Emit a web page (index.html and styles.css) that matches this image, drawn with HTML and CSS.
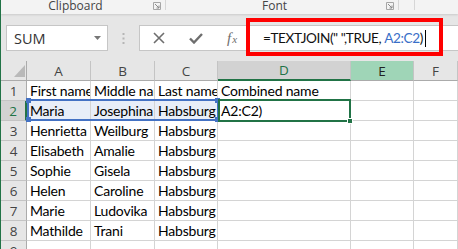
FILE: index.html
```html
<!DOCTYPE html>
<html lang="en">
<head>
    <meta charset="UTF-8">
    <title>TEXTJOIN</title>
    <link rel="stylesheet" href="styles.css">
</head>
<body>
<div class="app">

    <!-- Ribbon (bottom edge only) -->
    <div class="ribbon">
        <div class="group group-clipboard">
            <span class="group-label">Clipboard</span>
            <svg class="launcher" width="8" height="8" viewBox="0 0 8 8">
                <path d="M0.5 0.5V7.5H7.5V0.5Z" fill="none" stroke="#a6a6a6" stroke-width="1"/>
                <path d="M2 2L6 6M3.5 6H6V3.5" fill="none" stroke="#8a8a8a" stroke-width="1"/>
            </svg>
        </div>
        <div class="group group-font">
            <span class="group-label">Font</span>
            <svg class="launcher" width="8" height="8" viewBox="0 0 8 8">
                <path d="M0.5 0.5V7.5H7.5V0.5Z" fill="none" stroke="#a6a6a6" stroke-width="1"/>
                <path d="M2 2L6 6M3.5 6H6V3.5" fill="none" stroke="#8a8a8a" stroke-width="1"/>
            </svg>
        </div>
        <div class="group"></div>
    </div>

    <!-- Name box + formula bar -->
    <div class="formula-bar">
        <div class="name-box">
            <span>SUM</span>
            <svg width="7" height="4" viewBox="0 0 7 4"><path d="M0 0H7L3.5 4Z" fill="#777"/></svg>
        </div>
        <div class="grip">
            <svg width="3" height="11" viewBox="0 0 3 11">
                <rect x="0.5" y="0" width="2" height="2" fill="#b5b5b5"/>
                <rect x="0.5" y="4.5" width="2" height="2" fill="#b5b5b5"/>
                <rect x="0.5" y="9" width="2" height="2" fill="#b5b5b5"/>
            </svg>
        </div>
        <div class="formula-box">
            <div class="fx-buttons">
                <svg class="btn-cancel" width="12" height="12" viewBox="0 0 12 12">
                    <path d="M1 1L11 11M11 1L1 11" stroke="#6e6e6e" stroke-width="1.6"/>
                </svg>
                <svg class="btn-enter" width="14" height="11" viewBox="0 0 14 11">
                    <path d="M1 5.5L5 9.5L13 1" fill="none" stroke="#6e6e6e" stroke-width="2.4"/>
                </svg>
                <span class="btn-fx"><i>f</i><span class="fx-x">x</span></span>
            </div>
            <div class="formula-input">=TEXTJOIN(" ",TRUE, <span class="ref">A2:C2</span>)<span class="caret"></span></div>
        </div>
        <div class="callout"></div>
    </div>

    <!-- Worksheet -->
    <div class="sheet">
        <div class="hdr corner">
            <svg width="11" height="12" viewBox="0 0 11 12"><path d="M11 0V12H0Z" fill="#b9b9b9"/></svg>
        </div>
        <div class="hdr col">A</div>
        <div class="hdr col">B</div>
        <div class="hdr col">C</div>
        <div class="hdr col col-active">D</div>
        <div class="hdr col col-marked">E</div>
        <div class="hdr col">F</div>

        <div class="hdr row">1</div>
        <div class="cell">First name</div>
        <div class="cell">Middle name</div>
        <div class="cell">Last name</div>
        <div class="cell">Combined name</div>
        <div class="cell"></div>
        <div class="cell"></div>

        <div class="hdr row row-active">2</div>
        <div class="cell in-range">Maria</div>
        <div class="cell in-range">Josephina</div>
        <div class="cell in-range">Habsburg</div>
        <div class="cell editing">A2:C2)</div>
        <div class="cell"></div>
        <div class="cell"></div>

        <div class="hdr row">3</div>
        <div class="cell">Henrietta</div>
        <div class="cell">Weilburg</div>
        <div class="cell">Habsburg</div>
        <div class="cell"></div>
        <div class="cell"></div>
        <div class="cell"></div>

        <div class="hdr row">4</div>
        <div class="cell">Elisabeth</div>
        <div class="cell">Amalie</div>
        <div class="cell">Habsburg</div>
        <div class="cell"></div>
        <div class="cell"></div>
        <div class="cell"></div>

        <div class="hdr row">5</div>
        <div class="cell">Sophie</div>
        <div class="cell">Gisela</div>
        <div class="cell">Habsburg</div>
        <div class="cell"></div>
        <div class="cell"></div>
        <div class="cell"></div>

        <div class="hdr row">6</div>
        <div class="cell">Helen</div>
        <div class="cell">Caroline</div>
        <div class="cell">Habsburg</div>
        <div class="cell"></div>
        <div class="cell"></div>
        <div class="cell"></div>

        <div class="hdr row">7</div>
        <div class="cell">Marie</div>
        <div class="cell">Ludovika</div>
        <div class="cell">Habsburg</div>
        <div class="cell"></div>
        <div class="cell"></div>
        <div class="cell"></div>

        <div class="hdr row">8</div>
        <div class="cell">Mathilde</div>
        <div class="cell">Trani</div>
        <div class="cell">Habsburg</div>
        <div class="cell"></div>
        <div class="cell"></div>
        <div class="cell"></div>

        <div class="hdr row">9</div>
        <div class="cell"></div>
        <div class="cell"></div>
        <div class="cell"></div>
        <div class="cell"></div>
        <div class="cell"></div>
        <div class="cell"></div>

        <!-- Range reference highlight A2:C2 -->
        <div class="range-ref">
            <span class="knob knob-tl"></span>
            <span class="knob knob-tr"></span>
            <span class="knob knob-bl"></span>
            <span class="knob knob-br"></span>
        </div>
        <!-- Active cell D2 -->
        <div class="active-cell"><span class="fill-handle"></span></div>
    </div>

</div>
</body>
</html>
```

FILE: styles.css
```css
/* Reset */
* {
    margin: 0;
    padding: 0;
    box-sizing: border-box;
}

body {
    font-family: 'Lato', 'Liberation Sans', sans-serif;
    background-color: #fff;
    overflow: hidden;
}

.app {
    width: 458px;
    height: 249px;
    border-left: 1px solid #217346;
    overflow: hidden;
}

/* Ribbon */
.ribbon {
    display: flex;
    height: 14px;
    background-color: #f3f3f3;
    box-shadow: 0 1px 2px rgba(0, 0, 0, 0.12);
    position: relative;
    z-index: 1;
}

.group {
    position: relative;
    display: flex;
    justify-content: center;
    padding-right: 16px;
    height: 14px;
}

/* short separator line at the right of each group */
.group::after {
    content: "";
    position: absolute;
    right: 0;
    top: 0;
    width: 1px;
    height: 10px;
    background-color: #d6d6d6;
}

.group-clipboard {
    width: 165px;
}

.group-font {
    width: 233px;
}

.group-label {
    font-family: 'Open Sans', sans-serif;
    font-size: 12px;
    line-height: 12px;
    color: #444;
}

.launcher {
    position: absolute;
    right: 5px;
    top: 2px;
}

/* Formula bar */
.formula-bar {
    position: relative;
    display: flex;
    align-items: flex-start;
    height: 47px;
    padding: 11px 0 0 5px;
    background-color: #e6e6e6;
}

.name-box {
    display: flex;
    align-items: center;
    justify-content: space-between;
    width: 102px;
    height: 26px;
    padding: 0 6px 0 7px;
    background-color: #fff;
    border: 1px solid #c6c6c6;
    font-family: 'Open Sans', sans-serif;
    font-size: 14.5px;
    color: #333;
}

.grip {
    width: 31px;
    display: flex;
    justify-content: center;
    padding-top: 8px;
}

.formula-box {
    flex: 1;
    display: flex;
    align-items: center;
    height: 26px;
    background-color: #fff;
    border: 1px solid #c6c6c6;
    border-right: none;
}

.fx-buttons {
    display: flex;
    align-items: center;
    width: 111px;
    padding-left: 13px;
}

.btn-cancel {
    margin-right: 24px;
}

.btn-enter {
    margin-right: 24px;
}

.btn-fx {
    font-family: 'Liberation Serif', serif;
    font-size: 15px;
    font-style: italic;
    color: #6e6e6e;
}

.fx-x {
    font-size: 11px;
    margin-left: 1px;
}

.formula-input {
    padding-left: 12px;
    font-family: 'Lato', sans-serif;
    font-size: 13.6px;
    letter-spacing: -0.4px;
    color: #111;
    white-space: pre;
    display: flex;
    align-items: center;
}

.formula-input .ref {
    color: #3a6fc8;
}

.caret {
    display: inline-block;
    width: 1px;
    height: 17px;
    margin-left: 2px;
    background-color: #000;
}

/* red annotation box */
.callout {
    position: absolute;
    left: 245px;
    top: 4px;
    width: 197px;
    height: 38px;
    border: 4px solid #f00;
}

/* Worksheet */
.sheet {
    position: relative;
    display: grid;
    grid-template-columns: 26px 64px 64px 63px 133px 63px 1fr;
    grid-auto-rows: 20px;
}

.hdr {
    background-color: #e6e6e6;
    color: #444;
    font-family: 'Open Sans', sans-serif;
    font-size: 13.5px;
    display: flex;
    align-items: center;
    justify-content: center;
    border-right: 1px solid #c4c4c4;
    border-bottom: 1px solid #c4c4c4;
}

.hdr.col {
    border-bottom: 1px solid #ababab;
}

.hdr.row {
    border-right: 1px solid #ababab;
}

.corner {
    justify-content: flex-end;
    align-items: flex-end;
    padding: 0 1px 3px 0;
    border-bottom: 1px solid #ababab;
    border-right: 1px solid #ababab;
}

.col-active {
    background-color: #d2d2d2;
    color: #217346;
    border-bottom: 2px solid #217346 !important;
}

.col-marked {
    background-color: #9fd5b7;
    color: #222;
}

.row-active {
    background-color: #d2d2d2;
    color: #217346;
    border-right: 2px solid #217346 !important;
}

.cell {
    font-size: 14px;
    letter-spacing: -0.2px;
    color: #000;
    line-height: 20px;
    padding-left: 3px;
    white-space: nowrap;
    overflow: hidden;
    border-right: 1px solid #d4d4d4;
    border-bottom: 1px solid #d4d4d4;
}

.cell.in-range {
    background-color: #e8eef8;
}

.range-ref {
    position: absolute;
    left: 26px;
    top: 38px;
    width: 192px;
    height: 22px;
    border: 2px solid #4472c4;
}

.knob {
    position: absolute;
    width: 5px;
    height: 5px;
    background-color: #4472c4;
}

.knob-tl { left: -3px; top: -3px; }
.knob-tr { right: -3px; top: -3px; }
.knob-bl { left: -3px; bottom: -3px; }
.knob-br { right: -3px; bottom: -3px; }

.active-cell {
    position: absolute;
    left: 217px;
    top: 38px;
    width: 133px;
    height: 23px;
    border: 2px solid #217346;
}

.fill-handle {
    position: absolute;
    right: -4px;
    bottom: -4px;
    width: 6px;
    height: 6px;
    background-color: #217346;
    border: 1px solid #fff;
}
```
